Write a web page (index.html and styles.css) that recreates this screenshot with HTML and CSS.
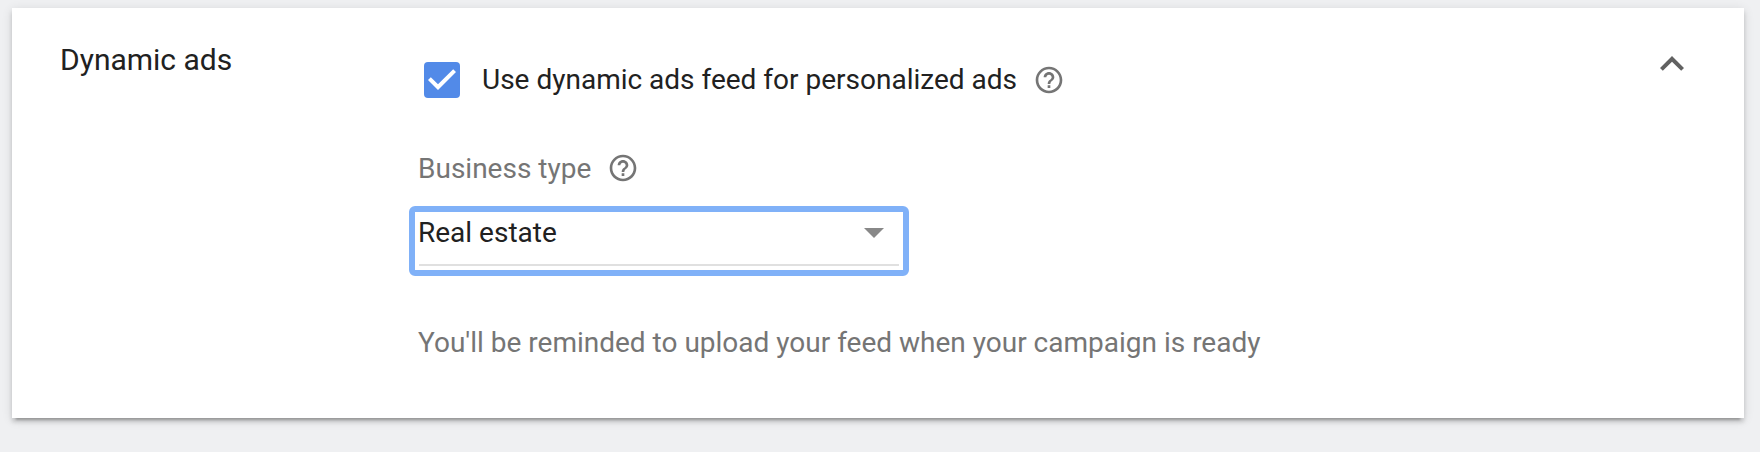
FILE: index.html
```html
<!DOCTYPE html>
<html lang="en">
<head>
    <meta charset="utf-8">
    <title>Dynamic ads</title>
    <link rel="stylesheet" href="styles.css">
</head>
<body>
    <section class="panel">
        <h2 class="panel-title">Dynamic ads</h2>
        <div class="panel-content">
            <div class="checkbox-row">
                <span class="checkbox" role="checkbox" aria-checked="true">
                    <svg viewBox="3 3 18 18"><path d="M10 17l-5-5 1.41-1.41L10 14.17l7.59-7.59L19 8z"/></svg>
                </span>
                <span class="checkbox-label">Use dynamic ads feed for personalized ads</span>
                <svg class="help" viewBox="0 0 24 24"><path d="M11 18h2v-2h-2v2zm1-16C6.48 2 2 6.48 2 12s4.48 10 10 10 10-4.48 10-10S17.52 2 12 2zm0 18c-4.41 0-8-3.59-8-8s3.59-8 8-8 8 3.59 8 8-3.59 8-8 8zm0-14c-2.21 0-4 1.79-4 4h2c0-1.1.9-2 2-2s2 .9 2 2c0 2-3 1.75-3 5h2c0-2.25 3-2.5 3-5 0-2.21-1.79-4-4-4z"/></svg>
            </div>
            <div class="field-label">
                <span>Business type</span>
                <svg class="help" viewBox="0 0 24 24"><path d="M11 18h2v-2h-2v2zm1-16C6.48 2 2 6.48 2 12s4.48 10 10 10 10-4.48 10-10S17.52 2 12 2zm0 18c-4.41 0-8-3.59-8-8s3.59-8 8-8 8 3.59 8 8-3.59 8-8 8zm0-14c-2.21 0-4 1.79-4 4h2c0-1.1.9-2 2-2s2 .9 2 2c0 2-3 1.75-3 5h2c0-2.25 3-2.5 3-5 0-2.21-1.79-4-4-4z"/></svg>
            </div>
            <div class="dropdown" tabindex="0">
                <div class="dropdown-button">
                    <span class="dropdown-text">Real estate</span>
                    <span class="arrow"></span>
                </div>
            </div>
            <p class="hint">You'll be reminded to upload your feed when your campaign is ready</p>
        </div>
        <svg class="collapse" viewBox="0 0 24 24"><path d="M12 8l-6 6 1.41 1.41L12 10.83l4.59 4.58L18 14z"/></svg>
    </section>
</body>
</html>
```
FILE: styles.css
```css
* {
    box-sizing: border-box;
}
body {
    margin: 0;
    padding: 8px 16px 34px 12px;
    height: 452px;
    background-color: #eff0f2;
    font-family: Roboto, sans-serif;
    font-size: 28px;
    line-height: 32px;
    color: #212121;
}
.panel {
    display: flex;
    height: 410px;
    padding-left: 48px;
    padding-right: 48px;
    background-color: #fff;
    box-shadow: 0 4px 4px rgba(0, 0, 0, .14), 0 6px 2px -4px rgba(0, 0, 0, .2), 0 2px 10px rgba(0, 0, 0, .12);
}
.panel-title {
    width: 349px; /* Keeps the content in its own column */
    margin: 0;
    padding-top: 36px;
    font-size: 30px;
    font-weight: 400;
    line-height: 32px;
}
.panel-content {
    flex: 1;
}
.checkbox-row {
    display: flex;
    align-items: center;
    height: 36px;
    margin-top: 54px;
    padding-left: 15px;
}
.checkbox {
    width: 36px;
    height: 36px;
    border-radius: 4px;
    background-color: #528ae8;
}
.checkbox svg {
    display: block;
    fill: #fff;
}
.checkbox-label {
    margin-left: 22px;
}
.help {
    width: 32px;
    height: 32px;
    margin-left: 16px;
    fill: #757575;
}
.field-label {
    display: flex;
    align-items: center;
    height: 32px;
    margin-top: 54px;
    padding-left: 9px;
    color: #757575;
}
.field-label span {
    padding-top: 2px;
}
.dropdown {
    width: 500px;
    height: 70px;
    margin-top: 22px;
    padding: 4px;
    border: 6px solid #80b1f8; /* Focus ring */
    border-radius: 6px;
    outline: none;
}
.dropdown-button {
    display: flex;
    align-items: center;
    justify-content: space-between;
    height: 50px;
    padding: 0 15px 14px 0;
    border-bottom: 2px solid #e0e0e0;
}
.dropdown-text {
    margin-left: -1px;
}
.arrow {
    border: 10px solid transparent;
    border-top-color: #888;
    border-bottom: 0;
}
.hint {
    margin: 51px 0 0 9px;
    color: #757575;
}
.collapse {
    width: 48px;
    height: 48px;
    margin-top: 32px;
    fill: #616161;
}
```
